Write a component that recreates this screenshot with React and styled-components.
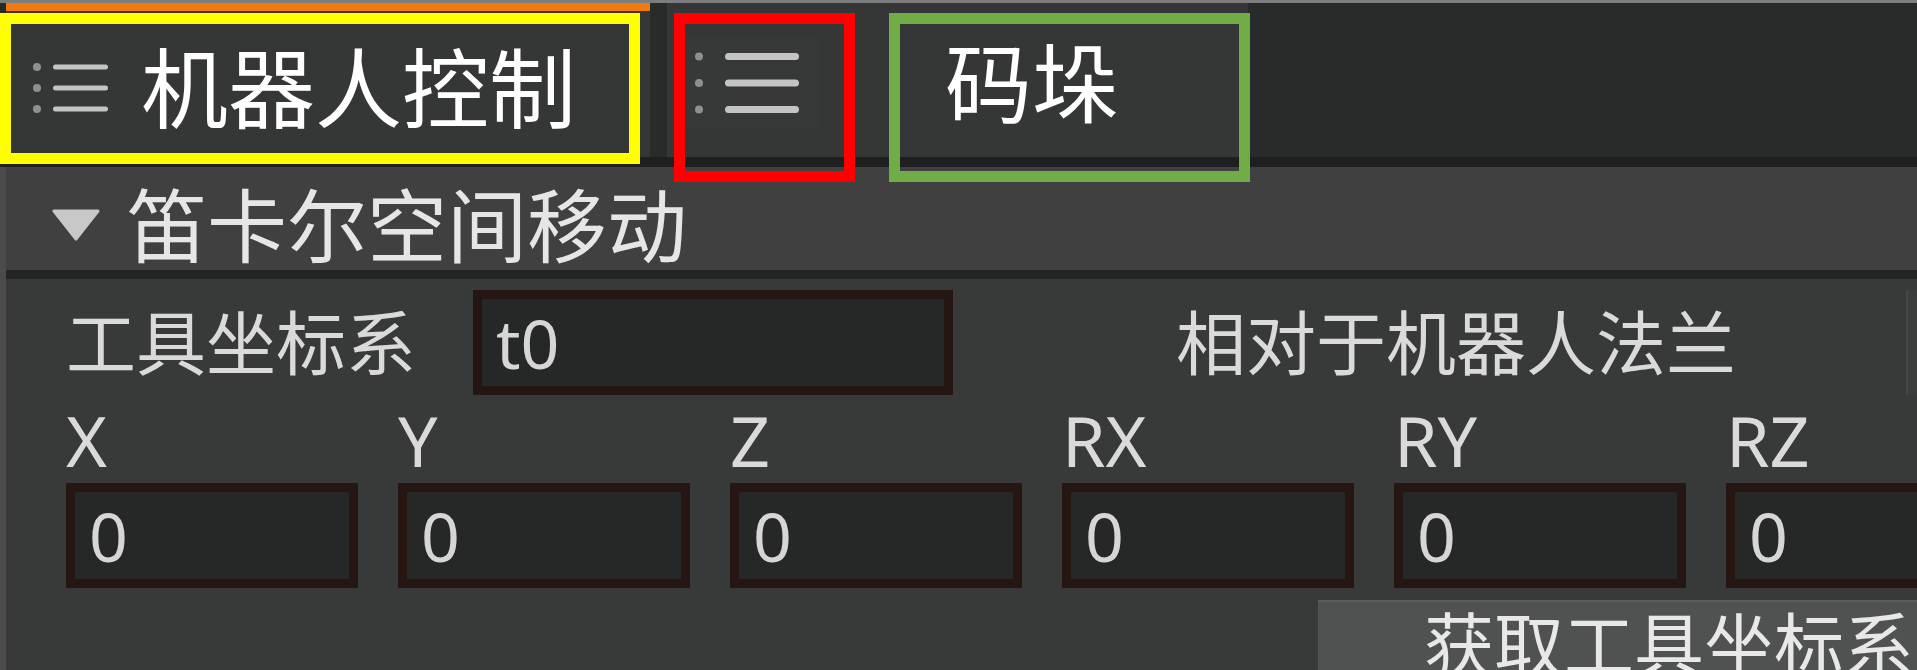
import React from 'react';
import styled, { createGlobalStyle } from 'styled-components';

const GlobalStyle = createGlobalStyle`
  html, body {
    margin: 0;
    padding: 0;
    background: #383939;
    overflow: hidden;
  }
  body {
    font-family: "Noto Sans", "Noto Sans CJK SC", sans-serif;
  }
`;

const Screen = styled.div`
  position: relative;
  width: 1917px;
  height: 670px;
  overflow: hidden;
  display: flex;
  flex-direction: column;
  background: #383939;
`;

const TabBar = styled.div`
  display: flex;
  align-items: stretch;
  gap: 17px;
  height: 167px;
  flex-shrink: 0;
  box-sizing: border-box;
  padding-left: 6px;
  background: #292b2a;
  border-top: 3px solid #7d7d7d;
  border-bottom: 10px solid #1e1f1f;
`;

const Tab = styled.div`
  display: flex;
  align-items: center;
  flex-shrink: 0;
  width: ${p => p.$width}px;
  box-sizing: border-box;
  background: #353636;
  color: #ffffff;
  font-size: 87px;
  line-height: 1;
  white-space: nowrap;
  border-top: ${p => (p.$active ? '8px solid #f07a0c' : 'none')};
  padding: ${p => (p.$active ? '8px 0 0 26px' : '6px 0 0 20px')};
`;

const TabIconBox = styled.div`
  display: flex;
  align-items: center;
  width: 132px;
  height: 90px;
  box-sizing: border-box;
  padding-left: 7px;
  background: #373838;
`;

const TabTitle = styled.span`
  margin-left: ${p => p.$gap}px;
`;

const Panel = styled.div`
  flex: 1;
  display: flex;
  flex-direction: column;
  border-left: 6px solid #4b4b4b;
`;

const SectionHeader = styled.div`
  display: flex;
  align-items: center;
  height: 112px;
  flex-shrink: 0;
  box-sizing: border-box;
  padding: 13px 0 0 46px;
  background: #404040;
  border-bottom: 9px solid #242525;
  color: #e6e6e6;
  font-size: 80px;
  line-height: 1;
  white-space: nowrap;
`;

const Caret = styled.svg`
  flex-shrink: 0;
  margin-right: 27px;
`;

const Body = styled.div`
  display: flex;
  flex-direction: column;
  padding: 11px 0 0 60px;
`;

const FieldRow = styled.div`
  display: flex;
  align-items: center;
  height: 105px;
  white-space: nowrap;

  & > * {
    flex-shrink: 0;
  }
`;

const RowLabel = styled.span`
  width: ${p => p.$width || 'auto'};
  margin-left: ${p => p.$offset || 0}px;
  color: #dadada;
  font-size: 70px;
  line-height: 1;
`;

const ValueInput = styled.input`
  width: ${p => p.$width}px;
  height: 105px;
  box-sizing: border-box;
  margin: 0;
  padding: 0 0 0 14px;
  border: 9px solid #251612;
  background: #262727;
  color: #d6d6d6;
  font-family: "Noto Sans", "Noto Sans CJK SC", sans-serif;
  font-size: 68px;
  outline: none;
`;

const EdgeBox = styled.div`
  width: 200px;
  height: 105px;
  margin-left: 170px;
  background: #3b3c3c;
  border-left: 2px solid #454646;
`;

const AxisGrid = styled.div`
  display: grid;
  grid-template-columns: repeat(6, 292px);
  column-gap: 40px;
  margin-top: 10px;
`;

const AxisCell = styled.div`
  display: flex;
  flex-direction: column;
`;

const AxisLabel = styled.span`
  height: 70px;
  margin-bottom: 8px;
  color: #dadada;
  font-size: 70px;
  line-height: 1;
`;

const ButtonRow = styled.div`
  display: flex;
  margin-top: 12px;
  padding-left: 1252px;
`;

const ActionButton = styled.button`
  flex-shrink: 0;
  width: 702px;
  height: 88px;
  margin: 0;
  padding: 0;
  border: none;
  border-top: 2px solid #5a5b5b;
  background: #505151;
  color: #e8e8e8;
  font-family: "Noto Sans", "Noto Sans CJK SC", sans-serif;
  font-size: 70px;
  line-height: 1;
  white-space: nowrap;
`;

const Highlight = styled.div`
  position: absolute;
  left: ${p => p.$x}px;
  top: ${p => p.$y}px;
  width: ${p => p.$w}px;
  height: ${p => p.$h}px;
  box-sizing: border-box;
  border: 11px solid ${p => p.$color};
  pointer-events: none;
`;

function ListIcon({ width, height, rowGap, dot, stroke, lineStart }) {
  const rows = [0, 1, 2].map(i => height / 2 + (i - 1) * rowGap);
  return (
    <svg width={width} height={height} viewBox={`0 0 ${width} ${height}`}>
      {rows.map(y => (
        <g key={y}>
          <circle cx={dot} cy={y} r={dot * 0.8} fill="#8f8f8f" />
          <line
            x1={lineStart + stroke / 2}
            y1={y}
            x2={width - stroke / 2}
            y2={y}
            stroke="#c4c4c4"
            strokeWidth={stroke}
            strokeLinecap="round"
          />
        </g>
      ))}
    </svg>
  );
}

const axes = ['X', 'Y', 'Z', 'RX', 'RY', 'RZ'];

export default function App() {
  return (
    <Screen>
      <GlobalStyle />
      <TabBar>
        <Tab $active $width={644}>
          <ListIcon width={76} height={52} rowGap={21} dot={5} stroke={5} lineStart={21} />
          <TabTitle $gap={33}>机器人控制</TabTitle>
        </Tab>
        <Tab $width={581}>
          <TabIconBox>
            <ListIcon width={105} height={64} rowGap={26.5} dot={5} stroke={7} lineStart={31} />
          </TabIconBox>
          <TabTitle $gap={126}>码垛</TabTitle>
        </Tab>
      </TabBar>

      <Panel>
        <SectionHeader>
          <Caret width="48" height="32" viewBox="0 0 48 32">
            <polygon points="2,2 46,2 24,30" fill="#c8c8c8" stroke="#c8c8c8" strokeWidth="3" strokeLinejoin="round" />
          </Caret>
          笛卡尔空间移动
        </SectionHeader>

        <Body>
          <FieldRow>
            <RowLabel $width="407px">工具坐标系</RowLabel>
            <ValueInput $width={480} defaultValue="t0" readOnly />
            <RowLabel $offset={223}>相对于机器人法兰</RowLabel>
            <EdgeBox />
          </FieldRow>

          <AxisGrid>
            {axes.map(axis => (
              <AxisCell key={axis}>
                <AxisLabel>{axis}</AxisLabel>
                <ValueInput $width={292} defaultValue="0" readOnly />
              </AxisCell>
            ))}
          </AxisGrid>

          <ButtonRow>
            <ActionButton>获取工具坐标系</ActionButton>
          </ButtonRow>
        </Body>
      </Panel>

      <Highlight $x={0} $y={13} $w={640} $h={151} $color="#ffff00" />
      <Highlight $x={674} $y={13} $w={181} $h={169} $color="#ff0000" />
      <Highlight $x={889} $y={13} $w={361} $h={169} $color="#70ad47" />
    </Screen>
  );
}
